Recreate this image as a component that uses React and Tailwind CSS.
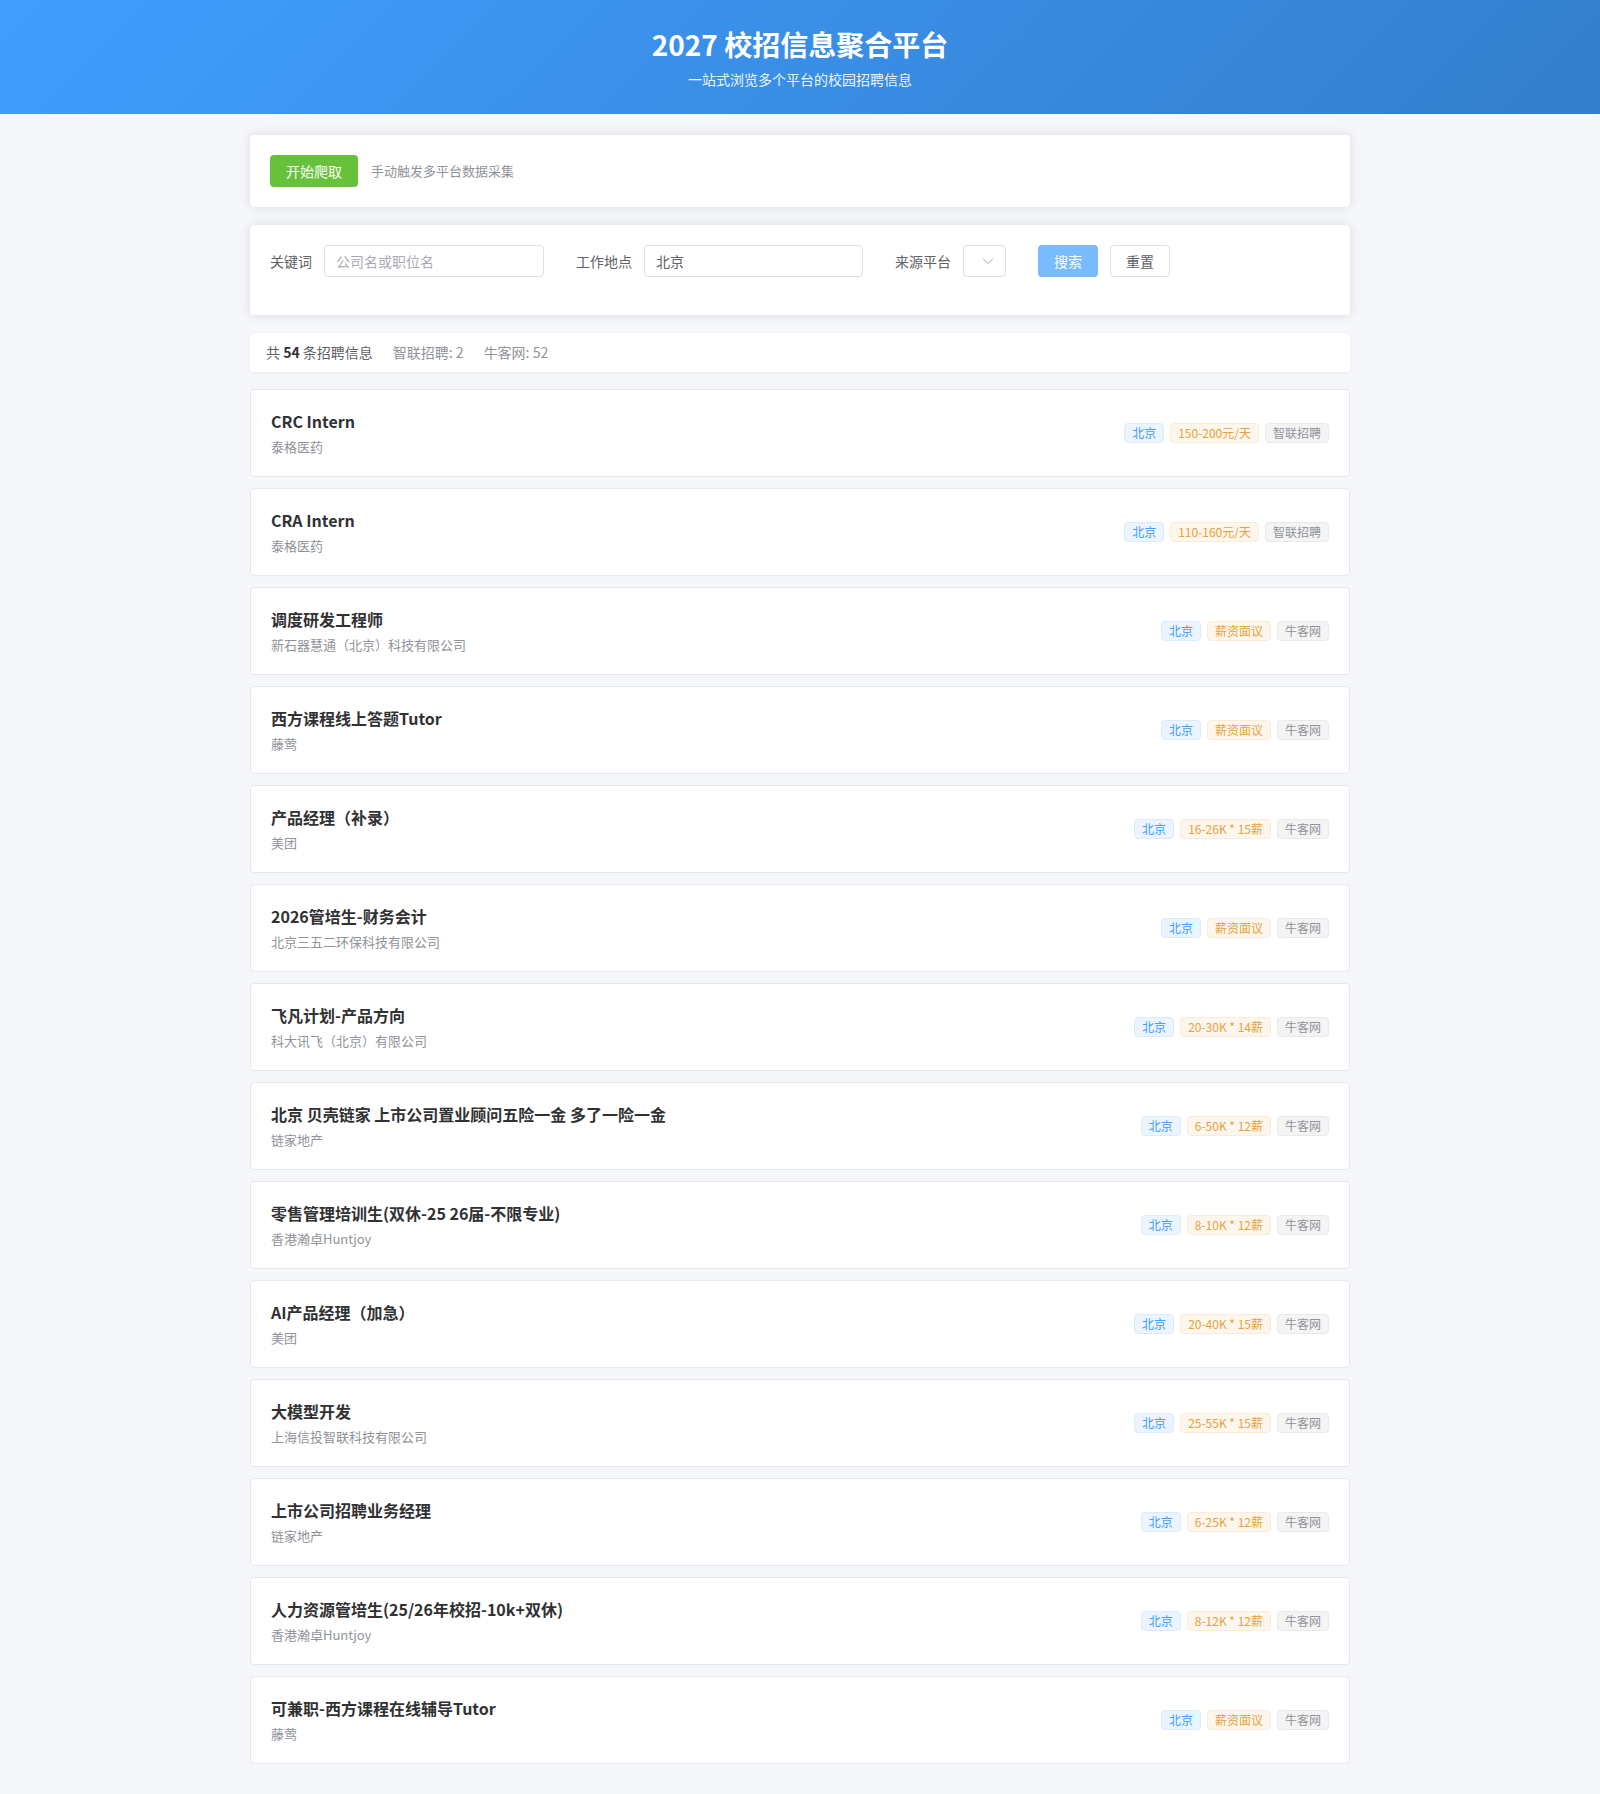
import React from "react";

const jobs = [
  { title: "CRC Intern", company: "泰格医药", city: "北京", salary: "150-200元/天", source: "智联招聘" },
  { title: "CRA Intern", company: "泰格医药", city: "北京", salary: "110-160元/天", source: "智联招聘" },
  { title: "调度研发工程师", company: "新石器慧通（北京）科技有限公司", city: "北京", salary: "薪资面议", source: "牛客网" },
  { title: "西方课程线上答题Tutor", company: "藤莺", city: "北京", salary: "薪资面议", source: "牛客网" },
  { title: "产品经理（补录）", company: "美团", city: "北京", salary: "16-26K * 15薪", source: "牛客网" },
  { title: "2026管培生-财务会计", company: "北京三五二环保科技有限公司", city: "北京", salary: "薪资面议", source: "牛客网" },
  { title: "飞凡计划-产品方向", company: "科大讯飞（北京）有限公司", city: "北京", salary: "20-30K * 14薪", source: "牛客网" },
  { title: "北京 贝壳链家 上市公司置业顾问五险一金 多了一险一金", company: "链家地产", city: "北京", salary: "6-50K * 12薪", source: "牛客网" },
  { title: "零售管理培训生(双休-25 26届-不限专业)", company: "香港瀚卓Huntjoy", city: "北京", salary: "8-10K * 12薪", source: "牛客网" },
  { title: "AI产品经理（加急）", company: "美团", city: "北京", salary: "20-40K * 15薪", source: "牛客网" },
  { title: "大模型开发", company: "上海信投智联科技有限公司", city: "北京", salary: "25-55K * 15薪", source: "牛客网" },
  { title: "上市公司招聘业务经理", company: "链家地产", city: "北京", salary: "6-25K * 12薪", source: "牛客网" },
  { title: "人力资源管培生(25/26年校招-10k+双休)", company: "香港瀚卓Huntjoy", city: "北京", salary: "8-12K * 12薪", source: "牛客网" },
  { title: "可兼职-西方课程在线辅导Tutor", company: "藤莺", city: "北京", salary: "薪资面议", source: "牛客网" },
];

const tagTone = {
  primary: "bg-[#ecf5ff] border-[#d9ecff] text-[#409eff]",
  warning: "bg-[#fdf6ec] border-[#faecd8] text-[#e6a23c]",
  info: "bg-[#f4f4f5] border-[#e9e9eb] text-[#909399]",
};

function Tag({ tone, children }) {
  return (
    <span
      className={`inline-flex h-[20px] items-center rounded-[4px] border px-[7px] text-[12px] leading-[18px] whitespace-nowrap ${tagTone[tone]}`}
    >
      {children}
    </span>
  );
}

function ArrowDown() {
  return (
    <svg viewBox="0 0 1024 1024" width="14" height="14" fill="#a8abb2">
      <path d="M831.872 340.864 512 652.672 192.128 340.864a30.592 30.592 0 0 0-42.752 0 29.12 29.12 0 0 0 0 41.6L489.664 714.24a32 32 0 0 0 44.672 0l340.288-331.712a29.12 29.12 0 0 0 0-41.728 30.592 30.592 0 0 0-42.752 0z" />
    </svg>
  );
}

function FormItem({ label, children }) {
  return (
    <div className="mr-[32px] mb-[18px] flex items-center">
      <label className="pr-[12px] text-[14px] leading-[32px] text-[#606266]">{label}</label>
      {children}
    </div>
  );
}

function JobCard({ job }) {
  return (
    <div className="flex items-center justify-between rounded-[4px] border border-[#e4e7ed] bg-white px-[20px] pt-[19px] pb-[19px]">
      <div className="min-w-0">
        <div className="text-[16px] leading-[24px] font-bold text-[#303133]">{job.title}</div>
        <div className="mt-[4px] text-[13px] leading-[20px] text-[#909399]">{job.company}</div>
      </div>
      <div className="flex items-center gap-[6px]">
        <Tag tone="primary">{job.city}</Tag>
        <Tag tone="warning">{job.salary}</Tag>
        <Tag tone="info">{job.source}</Tag>
      </div>
    </div>
  );
}

export default function App() {
  return (
    <div
      className="min-h-screen bg-[#f5f7fa]"
      style={{ fontFamily: '"Noto Sans CJK SC", "Noto Sans", sans-serif' }}
    >
      <header className="bg-[linear-gradient(135deg,#409eff,#337ecc)] pt-[27px] pb-[25px] text-center text-white">
        <h1 className="text-[28px] leading-[34px] font-bold">2027 校招信息聚合平台</h1>
        <p className="mt-[8px] text-[14px] leading-[20px] text-white/90">一站式浏览多个平台的校园招聘信息</p>
      </header>

      <main className="mx-auto flex max-w-[1100px] flex-col gap-[18px] pt-[21px] pb-[31px]">
        <section className="flex items-center rounded-[4px] bg-white p-[20px] shadow-[0_0_12px_rgba(0,0,0,0.12)]">
          <button className="h-[32px] rounded-[4px] bg-[#67c23a] px-[16px] text-[14px] text-white">开始爬取</button>
          <span className="ml-[13px] text-[13px] text-[#909399]">手动触发多平台数据采集</span>
        </section>

        <section className="rounded-[4px] bg-white px-[20px] pt-[20px] pb-[20px] shadow-[0_0_12px_rgba(0,0,0,0.12)]">
          <div className="flex flex-wrap items-center">
            <FormItem label="关键词">
              <div className="flex h-[32px] w-[220px] items-center rounded-[4px] border border-[#dcdfe6] px-[11px] text-[14px] text-[#a8abb2]">
                公司名或职位名
              </div>
            </FormItem>
            <FormItem label="工作地点">
              <div className="flex h-[32px] w-[219px] items-center rounded-[4px] border border-[#dcdfe6] px-[11px] text-[14px] text-[#606266]">
                北京
              </div>
            </FormItem>
            <FormItem label="来源平台">
              <div className="flex h-[32px] w-[43px] items-center justify-end rounded-[4px] border border-[#dcdfe6] pr-[10px]">
                <ArrowDown />
              </div>
            </FormItem>
            <div className="mb-[18px] flex items-center gap-[12px]">
              <button className="h-[32px] w-[60px] rounded-[4px] bg-[#79bbff] text-[14px] text-white">搜索</button>
              <button className="h-[32px] w-[60px] rounded-[4px] border border-[#dcdfe6] bg-white text-[14px] text-[#606266]">重置</button>
            </div>
          </div>
        </section>

        <section className="flex items-center rounded-[4px] bg-white px-[16px] py-[10px] text-[14px] leading-[19px] shadow-[0_1px_4px_rgba(0,0,0,0.05)]">
          <span className="text-[#606266]">
            共 <b className="font-bold text-[#303133]">54</b> 条招聘信息
          </span>
          <span className="ml-[20px] text-[#909399]">智联招聘: 2</span>
          <span className="ml-[20px] text-[#909399]">牛客网: 52</span>
        </section>

        <div className="mt-[-1px] flex flex-col gap-[11px]">
          {jobs.map((job, i) => (
            <JobCard key={i} job={job} />
          ))}
        </div>
      </main>
    </div>
  );
}
